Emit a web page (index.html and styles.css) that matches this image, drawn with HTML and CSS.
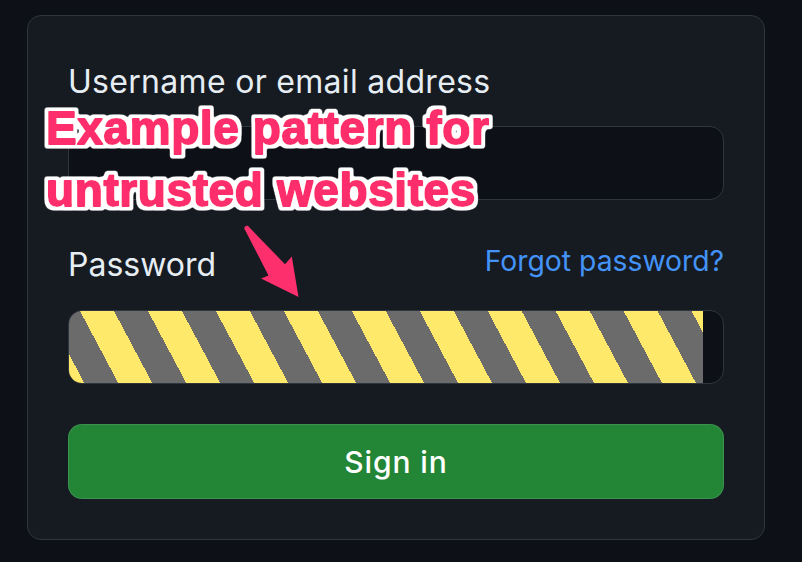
FILE: index.html
```html
<!DOCTYPE html>
<html>
<head>
<meta charset="utf-8">
<link rel="stylesheet" href="styles.css">
</head>
<body>
<div class="card">
  <label class="label wide">Username or email address</label>
  <div class="input"></div>
  <div class="row">
    <span class="label">Password</span>
    <a class="link">Forgot password?</a>
  </div>
  <div class="input pw"><div class="stripes"></div></div>
  <button class="btn">Sign in</button>
</div>
<svg class="annot" width="802" height="562" viewBox="0 0 802 562">
  <defs>
    <filter id="outline" x="-5%" y="-20%" width="110%" height="140%">
      <feMorphology in="SourceAlpha" operator="dilate" radius="3.2" result="d"/>
      <feGaussianBlur in="d" stdDeviation="0.8" result="b"/>
      <feComponentTransfer in="b" result="t">
        <feFuncA type="linear" slope="3" intercept="-0.4"/>
      </feComponentTransfer>
      <feFlood flood-color="#ffffff"/>
      <feComposite in2="t" operator="in" result="white"/>
      <feMerge>
        <feMergeNode in="white"/>
        <feMergeNode in="SourceGraphic"/>
      </feMerge>
    </filter>
  </defs>
  <g class="note" filter="url(#outline)">
    <text x="46" y="144">Example pattern for</text>
    <text x="46" y="206">untrusted websites</text>
  </g>
  <path class="arrow" d="M244.3 228.5 Q244.5 225.5 247.8 225.8 L285 264.3 L291.8 256.5 L298.5 297 L261 278.5 L268.5 275.5 Z"/>
</svg>
</body>
</html>
```

FILE: styles.css
```css
html, body {
  margin: 0;
  padding: 0;
}
body {
  background: #0d1117;
  width: 802px;
  height: 562px;
  overflow: hidden;
  position: relative;
  font-family: Inter, "Noto Sans", "Liberation Sans", sans-serif;
}
.card {
  margin: 15px 0 0 27px;
  width: 656px;
  padding: 42px 40px 40px;
  border: 1px solid #30363d;
  border-radius: 14px;
  background: #161b22;
  display: flex;
  flex-direction: column;
}
.label {
  font-size: 32px;
  line-height: 48px;
  color: #e6edf3;
}
.wide {
  letter-spacing: 0.3px;
}
.input {
  height: 72px;
  border: 1px solid #30363d;
  border-radius: 14px;
  background: #0d1117;
  margin-top: 20px;
  overflow: hidden;
  display: flex;
}
.row {
  display: flex;
  justify-content: space-between;
  align-items: flex-start;
  margin-top: 41px;
}
.link {
  font-size: 28.3px;
  line-height: 41px;
  color: #4493f8;
}
.pw {
  margin-top: 21px;
}
.stripes {
  width: calc(100% - 20px);
  height: 100%;
  background: repeating-linear-gradient(62deg, #ffe96b 0 13.5px, #6b6b6b 13.5px 43.5px, #ffe96b 43.5px 60px);
}
.btn {
  margin-top: 40px;
  height: 75px;
  border: 1px solid rgba(240, 246, 252, 0.12);
  border-radius: 14px;
  background: #238636;
  color: #ffffff;
  font-family: Inter, "Noto Sans", "Liberation Sans", sans-serif;
  font-size: 30px;
  font-weight: 500;
  letter-spacing: 0.9px;
  display: flex;
  align-items: center;
  justify-content: center;
  padding: 0;
}
.annot {
  position: absolute;
  left: 0;
  top: 0;
  pointer-events: none;
}
.note text {
  font-family: "Liberation Sans", Arial, sans-serif;
  font-weight: 700;
  font-size: 46px;
  letter-spacing: 0.6px;
  fill: #fe2f6d;
  stroke: #fe2f6d;
  stroke-width: 1.8px;
  stroke-linejoin: round;
}
.arrow {
  fill: #fe2f6d;
}
```
